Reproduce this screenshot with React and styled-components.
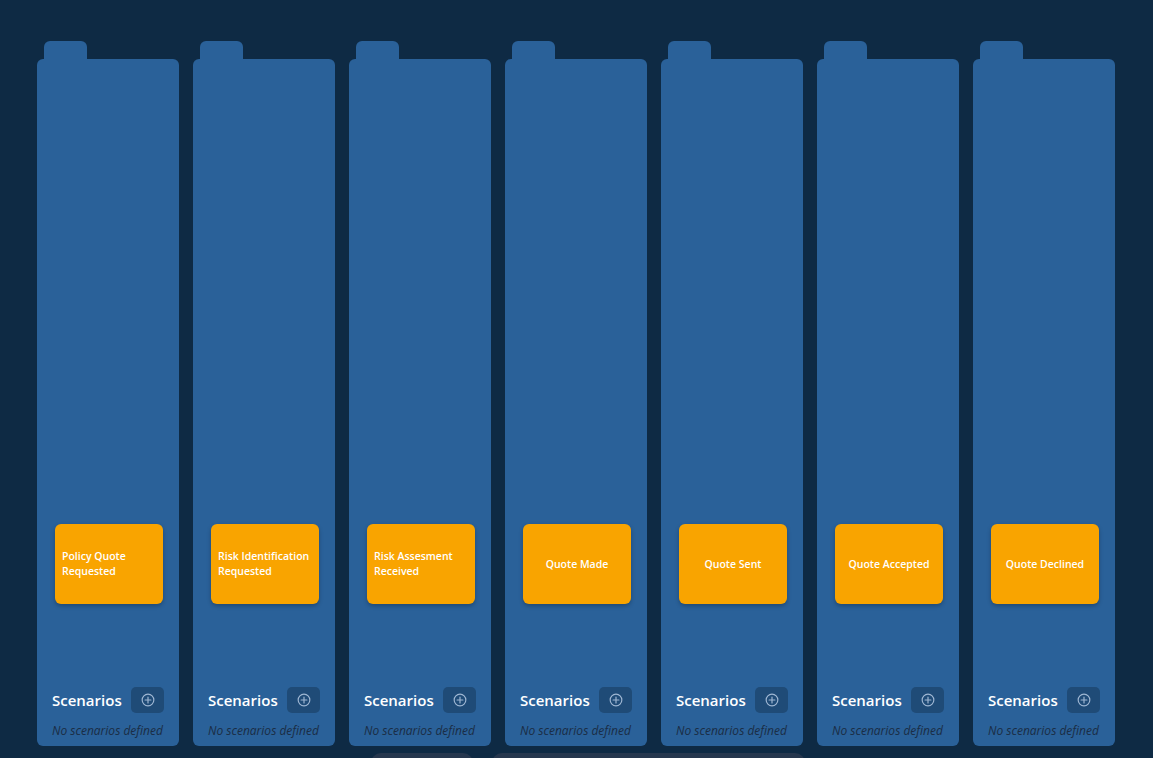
import React from 'react';
import styled, { createGlobalStyle } from 'styled-components';

const GlobalStyle = createGlobalStyle`
  html, body {
    margin: 0;
    padding: 0;
    background: #0e2a44;
    overflow: hidden;
    font-family: "Open Sans", "Noto Sans", sans-serif;
  }
`;

const Page = styled.div`
  width: 1153px;
  height: 758px;
  padding-top: 41px;
  box-sizing: border-box;
  overflow: hidden;
`;

const Board = styled.div`
  display: flex;
  gap: 14px;
  padding-left: 37px;
`;

const Lane = styled.div`
  width: 142px;
  display: flex;
  flex-direction: column;
`;

const Tab = styled.div`
  width: 43px;
  height: 18px;
  margin-left: 7px;
  background: #2a6199;
  border-radius: 6px 6px 0 0;
`;

const LaneBody = styled.div`
  height: 687px;
  background: #2a6199;
  border-radius: 6px;
  display: flex;
  flex-direction: column;
  padding: 0 15px 7px;
  box-sizing: border-box;
`;

const CardArea = styled.div`
  flex: 1;
  display: flex;
  align-items: flex-end;
  justify-content: flex-start;
  padding-bottom: 83px;
`;

const Card = styled.div`
  width: 108px;
  height: 80px;
  margin-left: 3px;
  flex-shrink: 0;
  box-sizing: border-box;
  padding: 0 7px;
  background: #f9a400;
  border-radius: 6px;
  box-shadow: 0 2px 4px rgba(0, 0, 0, 0.25);
  display: flex;
  align-items: center;
  justify-content: ${p => (p.$multi ? 'flex-start' : 'center')};
  color: #ffffff;
  font-size: 10.5px;
  font-weight: 600;
  line-height: 15px;
  text-align: ${p => (p.$multi ? 'left' : 'center')};
`;

const Footer = styled.div`
  display: flex;
  flex-direction: column;
  gap: 9px;
`;

const FooterHead = styled.div`
  display: flex;
  align-items: center;
  justify-content: space-between;
`;

const FooterTitle = styled.span`
  color: #ffffff;
  font-size: 15px;
  font-weight: 600;
`;

const AddButton = styled.button`
  width: 33px;
  height: 26px;
  border: none;
  border-radius: 5px;
  background: #1f4b77;
  display: flex;
  align-items: center;
  justify-content: center;
  padding: 0;
`;

const Empty = styled.div`
  color: #1a2d45;
  font-size: 12px;
  font-style: italic;
  white-space: nowrap;
`;

const Dock = styled.div`
  display: flex;
  gap: 19px;
  padding-left: 371px;
  margin-top: 7px;
`;

const DockItem = styled.div`
  width: ${p => p.$w}px;
  height: 40px;
  background: #26374e;
  border-radius: 10px;
`;

const PlusCircle = () => (
  <svg width="14" height="14" viewBox="0 0 24 24" fill="none" stroke="#9fb7d3" strokeWidth="2" strokeLinecap="round">
    <circle cx="12" cy="12" r="10" />
    <path d="M12 7v10M7 12h10" />
  </svg>
);

const stages = [
  { title: 'Policy Quote Requested', multi: true },
  { title: 'Risk Identification Requested', multi: true },
  { title: 'Risk Assesment Received', multi: true },
  { title: 'Quote Made' },
  { title: 'Quote Sent' },
  { title: 'Quote Accepted' },
  { title: 'Quote Declined' },
];

export default function App() {
  return (
    <Page>
      <GlobalStyle />
      <Board>
        {stages.map(stage => (
          <Lane key={stage.title}>
            <Tab />
            <LaneBody>
              <CardArea>
                <Card $multi={stage.multi}>{stage.title}</Card>
              </CardArea>
              <Footer>
                <FooterHead>
                  <FooterTitle>Scenarios</FooterTitle>
                  <AddButton type="button">
                    <PlusCircle />
                  </AddButton>
                </FooterHead>
                <Empty>No scenarios defined</Empty>
              </Footer>
            </LaneBody>
          </Lane>
        ))}
      </Board>
      <Dock>
        <DockItem $w={102} />
        <DockItem $w={313} />
      </Dock>
    </Page>
  );
}
